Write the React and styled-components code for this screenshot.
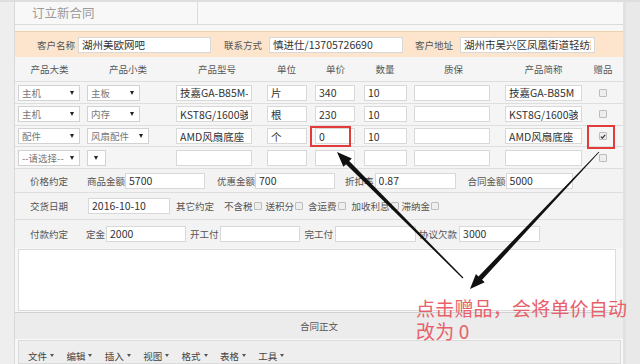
import React from 'react'
import styled, { createGlobalStyle } from 'styled-components'

const GlobalStyle = createGlobalStyle`
  html, body { margin:0; padding:0; background:#ebebeb; }
  body { font-family:"Noto Sans CJK SC", "Noto Sans", sans-serif; }
  * { box-sizing:border-box; }
`

const Page = styled.div`
  position:relative;
  width:640px;
  height:364px;
  overflow:hidden;
  display:flex;
  background:#ebebeb;
`

const Gutter = styled.div`
  flex:none;
  width:14px;
  background:#eeeeee;
  border-top:2px solid #dedede;
`

const RightStrip = styled.div`
  flex:1;
  background:#e9e9e9;
  border-left:3px solid #e2e2e2;
  border-top:2px solid #dedede;
`

const Panel = styled.div`
  flex:none;
  width:609px;
  display:flex;
  flex-direction:column;
  background:#f7f7f7;
  border-left:1px solid #d9d9d9;
  border-top:2px solid #dedede;
`

const TabBar = styled.div`
  height:23px;
  display:flex;
  border-bottom:1px solid #dcdcdc;
  background:#f8f8f8;
  margin-bottom:6px;
`

const Tab = styled.div`
  width:183px;
  padding-left:17px;
  font-size:12.5px;
  line-height:21px;
  color:#9a9a9a;
  border-right:1px solid #dcdcdc;
`

const CustomerRow = styled.div`
  height:27px;
  display:flex;
  align-items:center;
  background:#fde5cd;
  border-top:1px solid #efcfae;
`

const Label = styled.span`
  flex:none;
  margin-left:${p => p.$ml || 0}px;
  margin-right:${p => p.$mr || 0}px;
  font-size:9.5px;
  line-height:12px;
  color:#555;
  white-space:nowrap;
`

const Field = styled.input`
  flex:none;
  width:${p => p.$w}px;
  height:16px;
  margin-left:${p => p.$ml || 0}px;
  padding:0 3px;
  border:1px solid #d8d8d8;
  background:#fff;
  font-family:"Noto Sans CJK SC", "Noto Sans", sans-serif;
  font-size:10.5px;
  color:#333;
  outline:none;
`

const HeadRow = styled.div`
  height:25px;
  display:flex;
  align-items:center;
  border-bottom:1px solid #dedede;
  background:#f5f5f5;
`

const HeadCell = styled.div`
  flex:none;
  width:${p => p.$w}px;
  text-align:center;
  font-size:9.5px;
  color:#555;
`

const ItemRow = styled.div`
  height:22px;
  display:flex;
  align-items:center;
  border-bottom:1px solid #dedede;
  background:#f5f5f5;
`

const Cell = styled.div`
  flex:none;
  width:${p => p.$w}px;
  padding-left:${p => p.$pad || 0}px;
  display:flex;
  justify-content:${p => (p.$center ? 'center' : 'flex-start')};
  align-items:center;
`

const Select = styled.div`
  width:${p => p.$w}px;
  height:16px;
  display:flex;
  align-items:center;
  justify-content:${p => (p.$empty ? 'center' : 'space-between')};
  padding:0 5px 0 3px;
  border:1px solid #d2d2d2;
  background:#fff;
  font-size:9.5px;
  color:#777;
  white-space:nowrap;
`

const Caret = styled.span`
  width:0;
  height:0;
  border-left:2.5px solid transparent;
  border-right:2.5px solid transparent;
  border-top:4px solid #222;
`

const Box = styled.span`
  flex:none;
  position:relative;
  display:inline-flex;
  align-items:center;
  justify-content:center;
  width:8px;
  height:8px;
  margin-left:${p => p.$ml || 0}px;
  border:1px solid #bdbdbd;
  border-radius:1px;
  background:#eeeeee;
`

const TermRow = styled.div`
  height:${p => p.$h}px;
  display:flex;
  align-items:center;
  border-bottom:${p => (p.$last ? 'none' : '1px solid #dedede')};
  background:#f3f3f3;
`

const EditorWrap = styled.div`
  padding:1px 7px 1px 3px;
  background:#f7f7f7;
`

const Editor = styled.div`
  height:62px;
  border:1px solid #dcdcdc;
  background:#fff;
`

const SectionTitle = styled.div`
  height:28px;
  display:flex;
  align-items:center;
  justify-content:center;
  border-top:1px solid #d0d0d0;
  border-bottom:1px solid #fafafa;
  background:#ececec;
  font-size:9.5px;
  color:#555;
`

const Toolbar = styled.div`
  flex:1;
  margin:0 2px 0 3px;
  display:flex;
  align-items:flex-start;
  padding:8px 0 0 9px;
  border:1px solid #dadada;
  background:#eeeeee;
`

const Menu = styled.div`
  flex:none;
  width:38.4px;
  display:flex;
  align-items:center;
  gap:3px;
  font-size:9.5px;
  color:#444;
`

const MenuCaret = styled.span`
  width:0;
  height:0;
  border-left:2px solid transparent;
  border-right:2px solid transparent;
  border-top:3px solid #555;
`

const Overlay = styled.svg`
  position:absolute;
  left:0;
  top:0;
  pointer-events:none;
`

const Note = styled.div`
  position:absolute;
  left:416px;
  top:296px;
  font-size:19px;
  line-height:23px;
  letter-spacing:0.2px;
  color:#e8606a;
  white-space:nowrap;
`

const cols = [
  { title: '产品大类', w: 69, pad: 3 },
  { title: '产品小类', w: 88, pad: 3 },
  { title: '产品型号', w: 90, pad: 4 },
  { title: '单位', w: 49, pad: 5 },
  { title: '单价', w: 49, pad: 4 },
  { title: '数量', w: 50, pad: 4 },
  { title: '质保', w: 87, pad: 4 },
  { title: '产品简称', w: 93, pad: 8 },
  { title: '赠品', w: 26 },
]

const items = [
  { cat: '主机', sub: '主板', subW: 53, model: '技嘉GA-B85M-PLUS', unit: '片', price: '340', qty: '10', short: '技嘉GA-B85M' },
  { cat: '主机', sub: '内存', subW: 53, model: 'KST8G/1600骇客神条', unit: '根', price: '230', qty: '10', short: 'KST8G/1600骇客神条' },
  { cat: '配件', sub: '风扇配件', subW: 62, model: 'AMD风扇底座', unit: '个', price: '0', qty: '10', short: 'AMD风扇底座', gift: true },
  { cat: '--请选择--', sub: '', subW: 19, model: '', unit: '', price: '', qty: '', short: '' },
]

const Check = ({ checked, ml }) => (
  <Box $ml={ml}>
    {checked && (
      <svg width="7" height="7" viewBox="0 0 7 7">
        <path d="M1 3.6 L2.8 5.3 L6 1.5" fill="none" stroke="#333" strokeWidth="1.4" />
      </svg>
    )}
  </Box>
)

const Dropdown = ({ w, text }) => (
  <Select $w={w} $empty={!text}>
    {text && <span>{text}</span>}
    <Caret />
  </Select>
)

// tapered line ending in a solid head
function arrowPoints(x1, y1, x2, y2, w1, w2, headLen, headW) {
  const len = Math.hypot(x2 - x1, y2 - y1)
  const dx = (x2 - x1) / len
  const dy = (y2 - y1) / len
  const nx = -dy
  const ny = dx
  const bx = x2 - dx * headLen
  const by = y2 - dy * headLen
  const p = (x, y, s) => `${(x + nx * s).toFixed(1)},${(y + ny * s).toFixed(1)}`
  return [
    p(x1, y1, w1 / 2),
    p(bx, by, w2 / 2),
    p(bx, by, headW / 2),
    `${x2},${y2}`,
    p(bx, by, -headW / 2),
    p(bx, by, -w2 / 2),
    p(x1, y1, -w1 / 2),
  ].join(' ')
}

const App = () => {
  return (
    <React.Fragment>
      <GlobalStyle />
      <Page>
        <Gutter />
        <Panel>
          <TabBar>
            <Tab>订立新合同</Tab>
          </TabBar>

          <CustomerRow>
            <Label $ml={22} $mr={3}>客户名称</Label>
            <Field $w={133} defaultValue="湖州美欧网吧" readOnly />
            <Label $ml={13} $mr={7}>联系方式</Label>
            <Field $w={134} defaultValue="慎进仕/13705726690" readOnly />
            <Label $ml={12} $mr={7}>客户地址</Label>
            <Field $w={135} defaultValue="湖州市吴兴区凤凰街道轻纺路45号" readOnly />
          </CustomerRow>

          <HeadRow>
            {cols.map(c => (
              <HeadCell key={c.title} $w={c.w}>{c.title}</HeadCell>
            ))}
          </HeadRow>

          {items.map((it, i) => (
            <ItemRow key={i}>
              <Cell $w={cols[0].w} $pad={cols[0].pad}><Dropdown w={62} text={it.cat} /></Cell>
              <Cell $w={cols[1].w} $pad={cols[1].pad}><Dropdown w={it.subW} text={it.sub} /></Cell>
              <Cell $w={cols[2].w} $pad={cols[2].pad}><Field $w={76} defaultValue={it.model} readOnly /></Cell>
              <Cell $w={cols[3].w} $pad={cols[3].pad}><Field $w={40} defaultValue={it.unit} readOnly /></Cell>
              <Cell $w={cols[4].w} $pad={cols[4].pad}><Field $w={40} defaultValue={it.price} readOnly /></Cell>
              <Cell $w={cols[5].w} $pad={cols[5].pad}><Field $w={43} defaultValue={it.qty} readOnly /></Cell>
              <Cell $w={cols[6].w} $pad={cols[6].pad}><Field $w={76} defaultValue="" readOnly /></Cell>
              <Cell $w={cols[7].w} $pad={cols[7].pad}><Field $w={77} defaultValue={it.short} readOnly /></Cell>
              <Cell $w={cols[8].w} $center><Check checked={it.gift} /></Cell>
            </ItemRow>
          ))}

          <TermRow $h={24}>
            <Label $ml={15}>价格约定</Label>
            <Label $ml={19}>商品金额</Label>
            <Field $w={80} defaultValue="5700" readOnly />
            <Label $ml={12}>优惠金额</Label>
            <Field $w={80} defaultValue="700" readOnly />
            <Label $ml={10}>折扣率</Label>
            <Field $w={81} $ml={1} defaultValue="0.87" readOnly />
            <Label $ml={12}>合同金额</Label>
            <Field $w={67} defaultValue="5000" readOnly />
          </TermRow>

          <TermRow $h={27}>
            <Label $ml={15}>交货日期</Label>
            <Field $w={82} $ml={20} defaultValue="2016-10-10" readOnly />
            <Label $ml={6}>其它约定</Label>
            <Label $ml={10}>不含税</Label>
            <Check ml={1} />
            <Label $ml={4}>送积分</Label>
            <Check ml={1} />
            <Label $ml={5}>含运费</Label>
            <Check ml={1} />
            <Label $ml={6}>加收利息</Label>
            <Check ml={1} />
            <Label $ml={3}>滞纳金</Label>
            <Check ml={1} />
          </TermRow>

          <TermRow $h={29} $last>
            <Label $ml={15}>付款约定</Label>
            <Label $ml={18}>定金</Label>
            <Field $w={80} $ml={1} defaultValue="2000" readOnly />
            <Label $ml={4}>开工付</Label>
            <Field $w={80} $ml={1} defaultValue="" readOnly />
            <Label $ml={5}>完工付</Label>
            <Field $w={81} $ml={2} defaultValue="" readOnly />
            <Label $ml={3}>协议欠款</Label>
            <Field $w={81} $ml={2} defaultValue="3000" readOnly />
          </TermRow>

          <EditorWrap>
            <Editor />
          </EditorWrap>

          <SectionTitle>合同正文</SectionTitle>

          <Toolbar>
            {['文件', '编辑', '插入', '视图', '格式', '表格', '工具'].map(m => (
              <Menu key={m}>
                {m}
                <MenuCaret />
              </Menu>
            ))}
          </Toolbar>
        </Panel>
        <RightStrip />

        <Overlay width="640" height="364" viewBox="0 0 640 364">
          <rect x="311" y="127" width="39" height="19" fill="none" stroke="#e23b3b" strokeWidth="2" />
          <rect x="588" y="126" width="26" height="22" fill="none" stroke="#e23b3b" strokeWidth="2" />
          <polygon points={arrowPoints(463, 278, 337, 152, 1, 4.5, 15, 12)} fill="#111" />
          <polygon points={arrowPoints(599, 152, 470, 289, 0.8, 5, 15, 12)} fill="#111" />
        </Overlay>
        <Note>
          点击赠品，会将单价自动
          <br />
          改为 0
        </Note>
      </Page>
    </React.Fragment>
  )
}

export default App
